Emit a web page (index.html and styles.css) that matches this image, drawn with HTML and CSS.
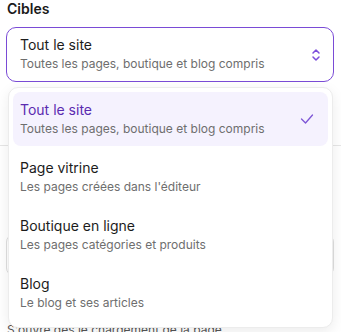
FILE: index.html
```html
<!DOCTYPE html>
<html lang="fr">

<head>
    <meta charset="UTF-8">
    <meta name="viewport" content="width=device-width, initial-scale=1.0">
    <title>Cibles</title>
    <link rel="stylesheet" href="styles.css">
</head>

<body>
    <div class="panel">
        <h2 class="label">Cibles</h2>
        <div class="select-wrap">
            <button class="select" type="button">
                <span class="option-text">
                    <span class="option-title">Tout le site</span>
                    <span class="option-desc">Toutes les pages, boutique et blog compris</span>
                </span>
                <svg class="chevrons" width="10" height="14" viewBox="0 0 10 14" fill="none">
                    <path d="M2 5l3-3 3 3M2 9l3 3 3-3" stroke="currentColor" stroke-width="1.5" stroke-linecap="round" stroke-linejoin="round"/>
                </svg>
            </button>

            <ul class="menu">
                <li class="item selected">
                    <span class="option-text">
                        <span class="option-title">Tout le site</span>
                        <span class="option-desc">Toutes les pages, boutique et blog compris</span>
                    </span>
                    <svg class="check" width="14" height="10" viewBox="0 0 14 10" fill="none">
                        <path d="M1.5 5l4 4 7-8" stroke="currentColor" stroke-width="1.3" stroke-linecap="round" stroke-linejoin="round"/>
                    </svg>
                </li>
                <li class="item">
                    <span class="option-text">
                        <span class="option-title">Page vitrine</span>
                        <span class="option-desc">Les pages créées dans l'éditeur</span>
                    </span>
                </li>
                <li class="item">
                    <span class="option-text">
                        <span class="option-title">Boutique en ligne</span>
                        <span class="option-desc">Les pages catégories et produits</span>
                    </span>
                </li>
                <li class="item">
                    <span class="option-text">
                        <span class="option-title">Blog</span>
                        <span class="option-desc">Le blog et ses articles</span>
                    </span>
                </li>
            </ul>
        </div>

        <hr class="divider">

        <div class="field">
            <div class="input"></div>
            <p class="hint">S'ouvre dès le chargement de la page.</p>
        </div>
    </div>
</body>

</html>
```

FILE: styles.css
```css
* {
    box-sizing: border-box;
}

body {
    margin: 0;
    background: #fff;
    font-family: Inter, "Noto Sans", sans-serif;
    color: #1c1c1c;
}

.panel {
    padding: 0 7px 0 6px;
}

.label {
    margin: 0 0 9px 1px;
    font-size: 14px;
    line-height: 18px;
    font-weight: 600;
    color: #1a1a1a;
}

.select-wrap {
    position: relative;
}

.select {
    display: flex;
    align-items: center;
    width: 100%;
    height: 55px;
    padding: 0 12px 1px 13px;
    border: 1.5px solid #7a4bd6;
    border-radius: 10px;
    background: #fff;
    font: inherit;
    text-align: left;
    color: inherit;
}

.option-text {
    display: flex;
    flex-direction: column;
    flex: 1;
}

.option-title {
    font-size: 14px;
    line-height: 20px;
    color: #1c1c1c;
}

.option-desc {
    font-size: 12px;
    line-height: 18px;
    color: #6e6e6e;
}

.chevrons {
    color: #7c4ddb;
    margin-top: 2px;
}

.menu {
    position: absolute;
    top: calc(100% + 5px);
    left: 2px;
    right: 1px;
    margin: 0;
    padding: 4px 4px 7px;
    list-style: none;
    background: #fff;
    border: 1px solid #ececec;
    border-radius: 10px;
    box-shadow: 0 4px 14px rgba(0, 0, 0, 0.08);
    z-index: 2;
    display: flex;
    flex-direction: column;
    gap: 4px;
}

.item {
    display: flex;
    align-items: center;
    height: 54px;
    padding: 0 14px 0 7px;
    border-radius: 8px;
}

.item.selected {
    background: #f5f2fe;
}

.item.selected .option-title {
    color: #5b2bb0;
}

.check {
    color: #7d55d6;
}

.divider {
    margin: 63px -7px 0 -6px;
    border: none;
    border-top: 1px solid #e6e6e6;
}

.field {
    padding-top: 88px;
}

.input {
    height: 42px;
    border: 1px solid #dedede;
    border-radius: 8px;
}

.hint {
    margin: 46px 0 0 1px;
    font-size: 12px;
    line-height: 16px;
    color: #555;
}
```
